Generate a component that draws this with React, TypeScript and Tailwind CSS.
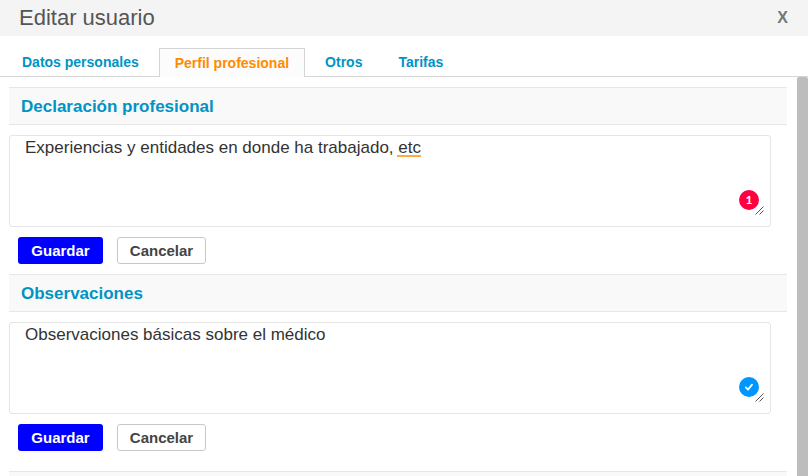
import { useState } from 'react';
import type { ReactNode } from 'react';

const tabs = ['Datos personales', 'Perfil profesional', 'Otros', 'Tarifas'];

const ErrorBadge = () => (
    <svg viewBox="0 0 20 20" className="w-5 h-5">
        <circle cx="10" cy="10" r="10" fill="#ff0040" />
        <text x="10" y="14" textAnchor="middle" fill="#fff" className="font-[Lato,sans-serif] text-[12px] font-bold">1</text>
    </svg>
);

const OkBadge = () => (
    <svg viewBox="0 0 20 20" className="w-5 h-5">
        <circle cx="10" cy="10" r="10" fill="#0096ff" />
        <path d="M6.8 10.4 L9 12.6 L13 7.6" fill="none" stroke="#fff" strokeWidth="1.8" strokeLinecap="round" strokeLinejoin="round" />
    </svg>
);

const Grip = () => (
    <svg viewBox="0 0 9 9" className="w-[9px] h-[9px]">
        <path d="M0.5 8.5 L8.5 0.5 M4.5 8.5 L8.5 4.5" stroke="#555" strokeWidth="1" />
    </svg>
);

type SectionProps = {
    id: string;
    title: string;
    initial: string;
    badge: ReactNode;
    mark?: ReactNode;
};

const Section = ({ id, title, initial, badge, mark }: SectionProps) => {
    const [value, setValue] = useState(initial);

    return (
        <section>
            <h2 className="h-[38px] px-3 pt-0.5 flex items-center bg-[#f9f9f9] border-y border-[#e7e7e7] text-[17px] font-bold text-[#0093c4]">
                <label htmlFor={id}>{title}</label>
            </h2>
            <div className="relative mt-2.5 mr-4">
                <textarea
                    id={id}
                    value={value}
                    spellCheck={false}
                    onChange={e => setValue(e.target.value)}
                    className="block w-full h-[92px] px-[15px] py-0.5 border border-[#e5e5e5] rounded-[3px] bg-white text-[17px] leading-5 text-[#333] resize-none outline-none"
                />
                {value === initial && mark}
                <span className="absolute right-3 bottom-[17px]">{badge}</span>
                <span className="absolute right-[7px] bottom-3"><Grip /></span>
            </div>
            <div className="flex gap-3.5 mt-2.5 mb-2.5 ml-[9px]">
                <button
                    type="button"
                    className="w-[85px] h-[27px] rounded-[3px] bg-[#0000ff] text-[15px] leading-5 font-bold text-white cursor-pointer">
                    Guardar
                </button>
                <button
                    type="button"
                    onClick={() => setValue(initial)}
                    className="w-[89px] h-[27px] rounded-[3px] border border-[#c8c8c8] bg-white text-[15px] leading-5 font-bold text-[#444] cursor-pointer">
                    Cancelar
                </button>
            </div>
        </section>
    );
};

export default function App() {
    const [active, setActive] = useState('Perfil profesional');

    return (
        <div className="h-screen flex flex-col overflow-hidden bg-white font-['Liberation_Sans',Arial,sans-serif]">
            <header className="h-9 shrink-0 pl-[19px] pr-5 flex items-center justify-between bg-[#f4f4f4]">
                <h1 className="text-[22px] leading-7 text-[#555]">Editar usuario</h1>
                <button type="button" aria-label="Cerrar" className="text-base font-bold text-[#777] cursor-pointer">X</button>
            </header>

            <nav className="h-[41px] shrink-0 pt-3 pl-1 flex items-stretch border-b border-[#d5d5d5] text-sm font-bold">
                {tabs.map(tab => (
                    <button
                        key={tab}
                        type="button"
                        onClick={() => setActive(tab)}
                        className={
                            tab === active
                                ? 'px-[15px] mx-0.5 -mb-px border border-b-0 border-[#d5d5d5] bg-[#fcfcfc] text-[#ff8a00] cursor-pointer'
                                : 'px-[18px] pb-0.5 -mb-px text-[#0093c4] cursor-pointer'
                        }>
                        {tab}
                    </button>
                ))}
            </nav>

            <div className="flex-1 min-h-0 flex">
                <main className="flex-1 pt-2.5 pl-[9px] pr-2.5 overflow-hidden">
                    <Section
                        id="declaracion"
                        title="Declaración profesional"
                        initial="Experiencias y entidades en donde ha trabajado, etc"
                        badge={<ErrorBadge />}
                        mark={<span className="absolute left-[388px] top-5 w-6 h-0.5 bg-[#ffab40]" />}
                    />
                    <Section
                        id="observaciones"
                        title="Observaciones"
                        initial="Observaciones básicas sobre el médico"
                        badge={<OkBadge />}
                    />
                    <div className="h-[38px] mt-5 bg-[#f9f9f9] border-y border-[#e7e7e7]" />
                </main>
                <div className="w-[11px] rounded-t-[2px] bg-[#bdbdbd]" />
            </div>
        </div>
    );
}
